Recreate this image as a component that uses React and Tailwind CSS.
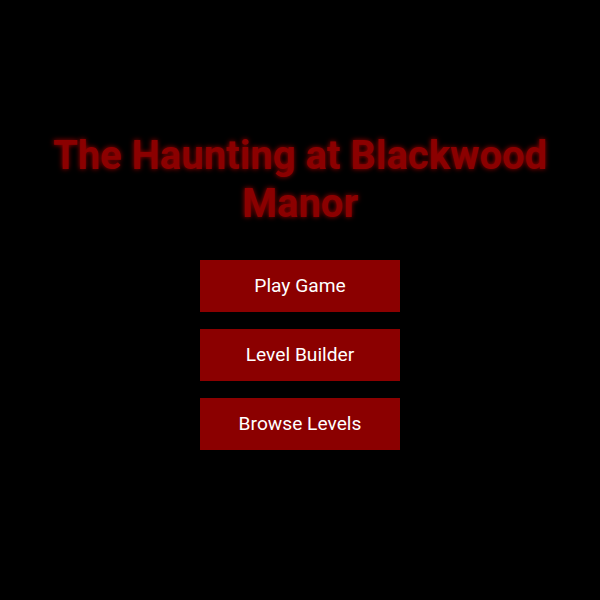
export default function App() {
  const items = ["Play Game", "Level Builder", "Browse Levels"];
  return (
    <div
      className="min-h-screen bg-black flex flex-col items-center justify-center pb-[18px]"
      style={{ fontFamily: "Roboto, 'Liberation Sans', sans-serif" }}
    >
      <h1 className="text-[40px] leading-[48px] font-bold text-[#8b0000] text-center px-12 [text-shadow:0_0_5px_rgba(255,0,0,0.6)]">
        The Haunting at Blackwood Manor
      </h1>
      <div className="mt-8 flex flex-col gap-[17px]">
        {items.map((label) => (
          <button
            key={label}
            className="w-[200px] h-[52px] bg-[#8b0000] text-white text-[19.2px]"
          >
            {label}
          </button>
        ))}
      </div>
    </div>
  );
}
